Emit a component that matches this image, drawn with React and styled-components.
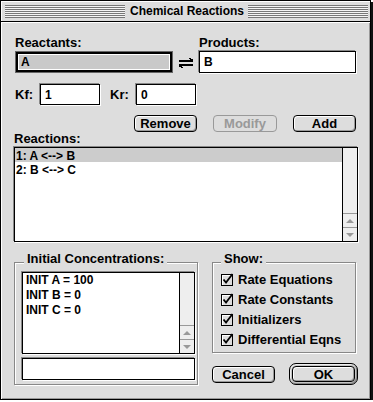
import React from 'react'
import styled, { createGlobalStyle } from 'styled-components'

const Global = createGlobalStyle`
  html, body {
    margin: 0;
    padding: 0;
    background: #fff;
  }
  body {
    font-family: "Liberation Sans", Arial, sans-serif;
    color: #000;
  }
  * { box-sizing: border-box; }
`

const Win = styled.div`
  width: 371px;
  height: 400px;
  border: 1px solid #000;
  box-shadow: 2px 2px 0 #111;
  background: #ddd;
  display: flex;
  flex-direction: column;
`

const TitleBar = styled.div`
  height: 21px;
  border-bottom: 1px solid #000;
  display: flex;
  align-items: center;
  padding: 0 2px 0 4px;
  box-shadow: inset 1px 1px 0 #fff;
`

const Stripes = styled.div`
  flex: 1;
  height: 13px;
  background: repeating-linear-gradient(to bottom, #777 0 1px, #f4f4f4 1px 2px);
`

const Title = styled.div`
  padding: 0 4px 0 5px;
  font-size: 12px;
  font-weight: bold;
  line-height: 14px;
`

const Body = styled.div`
  flex: 1;
  padding: 13px 12px 0 13px;
  display: flex;
  flex-direction: column;
  box-shadow: inset 1px 1px 0 #fff, inset -1px -1px 0 #999;
`

const TopGrid = styled.div`
  display: grid;
  grid-template-columns: 158px 26px 157px;
  grid-template-rows: 15px 22px;
  row-gap: 1px;
  padding-left: 1px;
`

const Label = styled.div`
  font-size: 13px;
  font-weight: bold;
  line-height: 15px;
  white-space: nowrap;
  width: ${p => (p.w ? `${p.w}px` : 'auto')};
  margin-top: ${p => p.mt || 0}px;
`

const Field = styled.div`
  height: ${p => p.h || 22}px;
  width: ${p => (p.w ? `${p.w}px` : 'auto')};
  border: 1px solid #000;
  box-shadow: -1px -1px 0 #888, 1px 1px 0 #fff;
  background: #fff;
  display: flex;
  align-items: center;
  padding-left: 4px;
  font-size: 12px;
  font-weight: bold;
`

const FocusField = styled.div`
  margin: 1px;
  border: 2px solid #000;
  box-shadow: 0 0 0 1px #666, inset 0 0 0 1px #fff;
  background: #c9c9c9;
  display: flex;
  align-items: center;
  padding-left: 3px;
  font-size: 12px;
  font-weight: bold;
`

const ArrowCell = styled.div`
  display: flex;
  align-items: center;
  justify-content: center;
  padding-top: 1px;
`

const KRow = styled.div`
  display: flex;
  align-items: center;
  margin-top: 11px;
  padding-left: 1px;
`

const BtnRow = styled.div`
  display: flex;
  align-items: center;
  gap: ${p => p.gap || 16}px;
  margin-top: ${p => p.mt || 0}px;
  padding-left: ${p => p.pl || 0}px;
`

const Button = styled.div`
  width: ${p => p.w || 63}px;
  height: ${p => p.h || 17}px;
  flex-shrink: 0;
  border: 1px solid ${p => (p.disabled ? '#999' : '#000')};
  border-radius: 4px;
  background: #ddd;
  box-shadow: ${p => (p.disabled ? 'none' : 'inset 1px 1px 0 #fff, inset -1px -1px 0 #999')};
  color: ${p => (p.disabled ? '#999' : '#000')};
  font-size: 13px;
  font-weight: bold;
  display: flex;
  align-items: center;
  justify-content: center;
  line-height: 1;
`

const DefaultRing = styled.div`
  flex-shrink: 0;
  border: 1px solid #000;
  border-radius: 7px;
  padding: 2px;
  background: #c4c4c4;
  box-shadow: inset 1px 1px 0 #eee, inset -1px -1px 0 #888;
`

const ListBox = styled.div`
  display: flex;
  height: ${p => p.h}px;
  border: 1px solid #000;
  background: #fff;
  box-shadow: -1px -1px 0 #888, 1px 1px 0 #fff;
  margin-top: ${p => p.mt || 0}px;
`

const Rows = styled.div`
  flex: 1;
  display: flex;
  flex-direction: column;
`

const Row = styled.div`
  height: ${p => p.h || 14}px;
  line-height: ${p => p.h || 14}px;
  padding: ${p => (p.h ? 0 : 1)}px 0 0 ${p => p.pl || 1}px;
  font-size: 12px;
  font-weight: bold;
  white-space: pre;
  background: ${p => (p.selected ? '#ccc' : 'transparent')};
`

const ScrollBar = styled.div`
  width: 15px;
  border-left: 1px solid #000;
  background: #eee;
  display: flex;
  flex-direction: column;
  justify-content: flex-end;
`

const ScrollArrow = styled.div`
  height: 14px;
  border-top: 1px solid #999;
  display: flex;
  align-items: center;
  justify-content: center;
  &::before {
    content: '';
    border-left: 4px solid transparent;
    border-right: 4px solid transparent;
    ${p => (p.up ? 'border-bottom: 4px solid #999;' : 'border-top: 4px solid #999;')}
  }
`

const Bottom = styled.div`
  display: flex;
  align-items: flex-start;
  gap: 14px;
  margin-top: 20px;
`

const Group = styled.div`
  position: relative;
  width: ${p => p.w}px;
  border: 1px solid #888;
  box-shadow: 1px 1px 0 #fff, inset 1px 1px 0 #fff;
  padding: ${p => p.pad};
  display: flex;
  flex-direction: column;
`

const Legend = styled.div`
  position: absolute;
  top: -12px;
  left: ${p => p.left}px;
  padding: 0 3px;
  background: #ddd;
  font-size: 13px;
  font-weight: bold;
  line-height: 15px;
`

const RightCol = styled.div`
  display: flex;
  flex-direction: column;
`

const CheckRow = styled.div`
  height: 20px;
  display: flex;
  align-items: center;
  gap: 4px;
  font-size: 13px;
  font-weight: bold;
  white-space: nowrap;
`

const Check = () => (
  <svg width="13" height="13" viewBox="0 0 13 13">
    <rect x="0.5" y="1.5" width="11" height="11" fill="#ddd" stroke="#000" />
    <path d="M1.5 12V2.5H11" stroke="#fff" fill="none" />
    <path d="M2.5 6.5L5 9.5L11.5 1" stroke="#000" strokeWidth="1.8" fill="none" />
  </svg>
)

const Equilibrium = () => (
  <svg width="14" height="10" viewBox="0 0 14 10">
    <rect x="0" y="2" width="14" height="2" fill="#000" />
    <rect x="10" y="0" width="2" height="1" fill="#000" />
    <rect x="11" y="1" width="3" height="1" fill="#000" />
    <rect x="0" y="6" width="14" height="2" fill="#000" />
    <rect x="0" y="8" width="3" height="1" fill="#000" />
    <rect x="2" y="9" width="2" height="1" fill="#000" />
  </svg>
)

const Scroll = () => (
  <ScrollBar>
    <ScrollArrow up />
    <ScrollArrow />
  </ScrollBar>
)

export default function App() {
  return (
    <>
      <Global />
      <Win>
        <TitleBar>
          <Stripes />
          <Title>Chemical Reactions</Title>
          <Stripes />
        </TitleBar>
        <Body>
          <TopGrid>
            <Label>Reactants:</Label>
            <div />
            <Label>Products:</Label>
            <FocusField>A</FocusField>
            <ArrowCell>
              <Equilibrium />
            </ArrowCell>
            <Field>B</Field>
          </TopGrid>

          <KRow>
            <Label w={25}>Kf:</Label>
            <Field w={60} h={21}>1</Field>
            <Label w={26} style={{ marginLeft: 10 }}>Kr:</Label>
            <Field w={60} h={21}>0</Field>
          </KRow>

          <BtnRow mt={10} pl={120} gap={16}>
            <Button>Remove</Button>
            <Button w={64} disabled>Modify</Button>
            <Button>Add</Button>
          </BtnRow>

          <Label mt={-1}>Reactions:</Label>
          <ListBox h={95} mt={1}>
            <Rows>
              <Row selected>1: A &lt;--&gt; B</Row>
              <Row>2: B &lt;--&gt; C</Row>
            </Rows>
            <Scroll />
          </ListBox>

          <Bottom>
            <Group w={186} pad="9px 2px 4px 7px">
              <Legend left={9}>Initial Concentrations:</Legend>
              <ListBox h={82}>
                <Rows>
                  <Row h={15} pl={3}>INIT A = 100</Row>
                  <Row h={15} pl={3}>INIT B = 0</Row>
                  <Row h={15} pl={3}>INIT C = 0</Row>
                </Rows>
                <Scroll />
              </ListBox>
              <Field h={22} style={{ marginTop: 4 }} />
            </Group>

            <RightCol>
              <Group w={144} pad="6px 0 3px 8px">
                <Legend left={8}>Show:</Legend>
                <CheckRow><Check />Rate Equations</CheckRow>
                <CheckRow><Check />Rate Constants</CheckRow>
                <CheckRow><Check />Initializers</CheckRow>
                <CheckRow><Check />Differential Eqns</CheckRow>
              </Group>
              <BtnRow mt={10} gap={14}>
                <Button>Cancel</Button>
                <DefaultRing>
                  <Button h={16}>OK</Button>
                </DefaultRing>
              </BtnRow>
            </RightCol>
          </Bottom>
        </Body>
      </Win>
    </>
  )
}
